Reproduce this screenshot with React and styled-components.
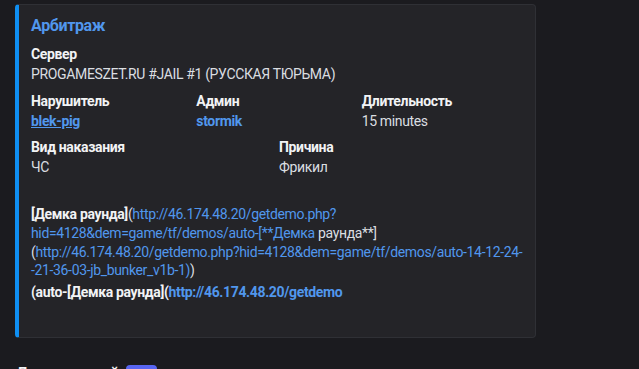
import styled, { createGlobalStyle } from 'styled-components'

const GlobalStyle = createGlobalStyle`
  html, body {
    margin: 0;
    padding: 0;
    background: #1b1b1f;
    font-family: Roboto, "Noto Sans", sans-serif;
  }
`

const Page = styled.div`
  width: 639px;
  height: 369px;
  overflow: hidden;
  padding-top: 4px;
  box-sizing: border-box;
`

const Embed = styled.article`
  margin-left: 15px;
  width: 521px;
  box-sizing: border-box;
  background: #242428;
  border: 1px solid #2f3035;
  border-left: 4px solid #0f8ff2;
  border-radius: 4px;
  padding: 8px 16px 32px 12px;
  color: #dbdee1;
  letter-spacing: -0.35px;
`

const Title = styled.div`
  margin-top: 2px;
  font-size: 16px;
  line-height: 22px;
  font-weight: 700;
  color: #5197ed;
`

const Fields = styled.div`
  display: grid;
  grid-template-columns: repeat(12, 1fr);
  column-gap: 8px;
  row-gap: 8px;
  margin-top: 8px;
`

const Field = styled.div`
  grid-column: span ${p => p.$span || 12};
  min-width: 0;
`

const Name = styled.div`
  font-size: 14px;
  line-height: 18px;
  font-weight: 700;
  color: #f2f3f5;
  margin-bottom: 2px;
  min-height: 18px;
`

const Value = styled.div`
  font-size: 14px;
  line-height: 18.7px;
  color: #dbdee1;
  white-space: nowrap;
`

const Mention = styled.a`
  color: #5197ed;
  font-weight: 700;
  text-decoration: ${p => (p.$under ? 'underline' : 'none')};
`

const Link = styled.a`
  color: #5197ed;
  text-decoration: none;
  font-weight: ${p => (p.$bold ? 700 : 400)};
`

const Strong = styled.b`
  color: #f2f3f5;
  font-weight: 700;
`

const Para = styled.p`
  margin: 0 0 3px;
  font-weight: ${p => (p.$bold ? 700 : 400)};
  color: ${p => (p.$bold ? '#f2f3f5' : '#dbdee1')};
`

const NextMessage = styled.div`
  display: flex;
  align-items: center;
  gap: 7px;
  margin: 26px 0 0 16px;
`

const Author = styled.span`
  font-size: 16px;
  font-weight: 600;
  color: #f2f3f5;
  letter-spacing: -0.3px;
`

const BotTag = styled.span`
  background: #5865f2;
  color: #fff;
  font-size: 10px;
  font-weight: 700;
  border-radius: 4px;
  padding: 1px 6px;
  line-height: 15px;
`

export default function App() {
  return (
    <Page>
      <GlobalStyle />
      <Embed>
        <Title>Арбитраж</Title>
        <Fields>
          <Field>
            <Name>Сервер</Name>
            <Value>PROGAMESZET.RU #JAIL #1 (РУССКАЯ ТЮРЬМА)</Value>
          </Field>
          <Field $span={4}>
            <Name>Нарушитель</Name>
            <Value><Mention $under>blek-pig</Mention></Value>
          </Field>
          <Field $span={4}>
            <Name>Админ</Name>
            <Value><Mention>stormik</Mention></Value>
          </Field>
          <Field $span={4}>
            <Name>Длительность</Name>
            <Value>15 minutes</Value>
          </Field>
          <Field $span={6}>
            <Name>Вид наказания</Name>
            <Value>ЧС</Value>
          </Field>
          <Field $span={6}>
            <Name>Причина</Name>
            <Value>Фрикил</Value>
          </Field>
          <Field>
            <Name>{'\u200b'}</Name>
            <Value>
              <Para>
                <Strong>[Демка раунда]</Strong>(<Link>http://46.174.48.20/getdemo.php?</Link>
                <br />
                <Link>hid=4128&amp;dem=game/tf/demos/auto-[**Демка</Link> раунда**]
                <br />
                (<Link>http://46.174.48.20/getdemo.php?hid=4128&amp;dem=game/tf/demos/auto-14-12-24-</Link>
                <br />
                <Link>-21-36-03-jb_bunker_v1b-1)</Link>)
              </Para>
              <Para $bold>
                (auto-[Демка раунда](<Link $bold>http://46.174.48.20/getdemo</Link>
              </Para>
            </Value>
          </Field>
        </Fields>
      </Embed>
      <NextMessage>
        <Author>Двухсменный</Author>
        <BotTag>BOT</BotTag>
      </NextMessage>
    </Page>
  )
}
